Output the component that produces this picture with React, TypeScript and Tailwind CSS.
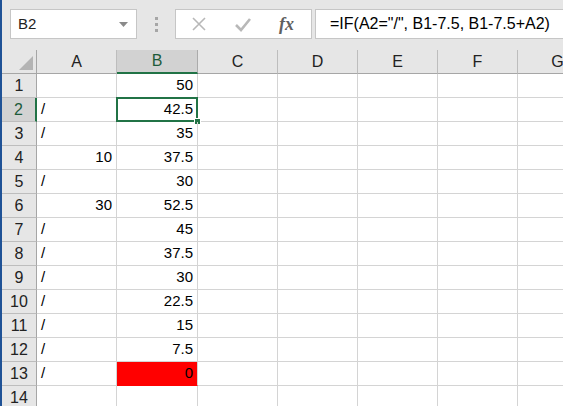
import React from "react";

const cols = ["A", "B", "C", "D", "E", "F", "G"];

const rows: [string, string][] = [
  ["", "50"],
  ["/", "42.5"],
  ["/", "35"],
  ["10", "37.5"],
  ["/", "30"],
  ["30", "52.5"],
  ["/", "45"],
  ["/", "37.5"],
  ["/", "30"],
  ["/", "22.5"],
  ["/", "15"],
  ["/", "7.5"],
  ["/", "0"],
  ["", ""],
];

const font = { fontFamily: '"Liberation Sans", Arial, sans-serif' };

function Toolbar() {
  return (
    <div className="h-[50px] bg-[#e6e6e6] flex items-start pt-[9px] pl-[8px] shrink-0 overflow-hidden">
      {/* Name box */}
      <div className="w-[127px] h-[30px] shrink-0 bg-white border border-[#c6c6c6] flex items-center justify-between pl-[7px] pr-[8px]">
        <span className="text-[15px] text-[#222]">B2</span>
        <svg width="9" height="5" viewBox="0 0 9 5">
          <path d="M0 0 L9 0 L4.5 5 Z" fill="#8a8a8a" />
        </svg>
      </div>
      {/* grip dots */}
      <div className="w-[38px] h-[30px] shrink-0 flex flex-col items-center justify-center gap-[3px]">
        <span className="w-[3px] h-[3px] bg-[#a6a6a6]" />
        <span className="w-[3px] h-[3px] bg-[#a6a6a6]" />
        <span className="w-[3px] h-[3px] bg-[#a6a6a6]" />
      </div>
      {/* cancel / enter / fx */}
      <div className="w-[137px] h-[30px] shrink-0 bg-white border border-[#c6c6c6] flex items-center pl-[15px]">
        <svg width="16" height="16" viewBox="0 0 16 16" className="mr-[27px] shrink-0">
          <path d="M2 2 L14 14 M14 2 L2 14" stroke="#b8b8b8" strokeWidth="1.6" />
        </svg>
        <svg width="18" height="16" viewBox="0 0 18 16" className="mr-[27px] shrink-0">
          <path d="M2 9 L7 14 L16 3" stroke="#b8b8b8" strokeWidth="2.6" fill="none" />
        </svg>
        <span
          className="text-[18px] italic font-bold text-[#5f5f5f] leading-none"
          style={{ fontFamily: '"Liberation Serif", "Times New Roman", serif' }}
        >
          fx
        </span>
      </div>
      {/* formula */}
      <div className="w-[270px] h-[30px] shrink-0 bg-white border border-[#c6c6c6] ml-[3px] flex items-center pl-[14px]">
        <span className="text-[16px] text-black whitespace-nowrap">
          =IF(A2="/", B1-7.5, B1-7.5+A2)
        </span>
      </div>
    </div>
  );
}

function HeaderRow() {
  return (
    <div className="flex h-[24px] shrink-0">
      <div className="w-[35px] shrink-0 bg-[#e6e6e6] border-r border-b border-[#a6a6a6] relative">
        <svg width="14" height="14" viewBox="0 0 14 14" className="absolute right-[3px] bottom-[3px]">
          <path d="M14 0 L14 14 L0 14 Z" fill="#b4b4b4" />
        </svg>
      </div>
      {cols.map((c) =>
        c === "B" ? (
          <div
            key={c}
            className="w-[81px] shrink-0 bg-[#d2d2d2] border-r border-[#ababab] border-b-2 border-b-[#217346] flex items-center justify-center text-[16px] text-[#1d5b3a]"
          >
            {c}
          </div>
        ) : (
          <div
            key={c}
            className="w-[80px] shrink-0 bg-[#e6e6e6] border-r border-b border-[#bdbdbd] border-b-[#a6a6a6] flex items-center justify-center text-[16px] text-[#222]"
          >
            {c}
          </div>
        )
      )}
    </div>
  );
}

export default function App() {
  return (
    <div className="w-[563px] h-[406px] overflow-hidden flex bg-white" style={font}>
      <div className="w-[2px] shrink-0 bg-[#1f5296]" />
      <div className="flex-1 flex flex-col min-w-0">
        <Toolbar />
        <HeaderRow />
        {rows.map(([a, b], i) => {
          const n = i + 1;
          const sel = n === 2;
          const red = n === 13;
          return (
            <div key={n} className="flex h-[24px] shrink-0">
              <div
                className={
                  sel
                    ? "w-[35px] shrink-0 bg-[#d2d2d2] border-r-2 border-r-[#217346] border-b border-b-[#bdbdbd] flex items-center justify-center text-[16px] text-[#1d5b3a]"
                    : "w-[35px] shrink-0 bg-[#e6e6e6] border-r border-r-[#a6a6a6] border-b border-b-[#bdbdbd] flex items-center justify-center text-[16px] text-[#222]"
                }
              >
                {n}
              </div>
              <div className="w-[80px] shrink-0 border-r border-b border-[#d4d4d4] flex items-center px-[4px] text-[15px] text-black">
                {a === "/" ? <span>{a}</span> : <span className="ml-auto">{a}</span>}
              </div>
              <div
                className={
                  red
                    ? "w-[81px] shrink-0 bg-[#ff0000] border-b border-r border-[#ff0000] border-r-[#d4d4d4] flex items-center justify-end px-[4px] text-[15px] text-black"
                    : "w-[81px] shrink-0 border-r border-b border-[#d4d4d4] flex items-center justify-end px-[4px] text-[15px] text-black relative"
                }
              >
                {b}
                {sel && (
                  <>
                    <div className="absolute -left-[1px] -top-[1px] w-[82px] h-[25px] border-2 border-[#217346]" />
                    <div className="absolute -right-[4px] -bottom-[4px] w-[7px] h-[7px] bg-[#217346] border border-white" />
                  </>
                )}
              </div>
              {cols.slice(2).map((c) => (
                <div key={c} className="w-[80px] shrink-0 border-r border-b border-[#d4d4d4]" />
              ))}
            </div>
          );
        })}
      </div>
    </div>
  );
}
